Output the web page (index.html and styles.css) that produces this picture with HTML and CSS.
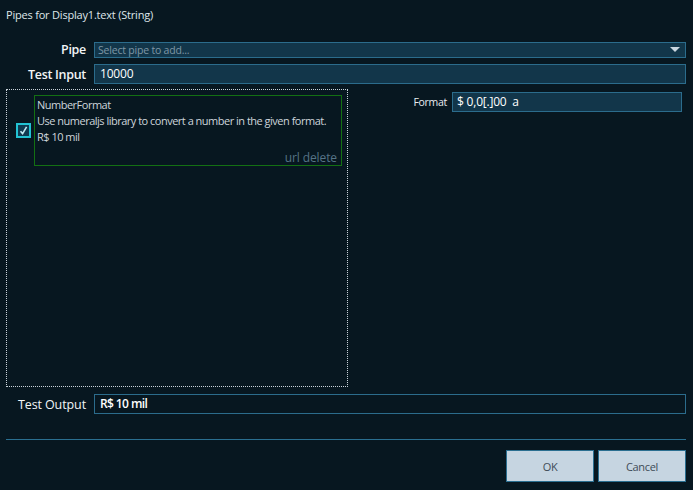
FILE: index.html
```html
<!DOCTYPE html>
<html>
<head>
<meta charset="utf-8">
<link rel="stylesheet" href="styles.css">
</head>
<body>
<div class="dialog">
  <div class="title">Pipes for Display1.text (String)</div>
  <div class="form-row first">
    <label class="label">Pipe</label>
    <div class="select">
      <span class="placeholder">Select pipe to add...</span>
      <svg class="arrow" width="10" height="5" viewBox="0 0 10 5"><path d="M0 0H10L5 5Z" fill="#c9d6e0"/></svg>
    </div>
  </div>
  <div class="form-row">
    <label class="label">Test Input</label>
    <div class="input">10000</div>
  </div>
  <div class="middle">
    <div class="pipes">
      <div class="pipe-item">
        <div class="check">
          <svg width="11" height="11" viewBox="0 0 11 11"><path d="M2.5 6.2L4.6 8.6L8.6 1.8" fill="none" stroke="#bfe9f0" stroke-width="1.6"/></svg>
        </div>
        <div class="pipe-card">
          <div class="pipe-name">NumberFormat</div>
          <div class="pipe-desc">Use numeraljs library to convert a number in the given format.</div>
          <div class="pipe-result">R$ 10 mil</div>
          <div class="pipe-links">url delete</div>
        </div>
      </div>
    </div>
    <div class="params">
      <div class="param-row">
        <span class="param-label">Format</span>
        <div class="param-input">$ 0,0[.]00&nbsp; a</div>
      </div>
    </div>
  </div>
  <div class="form-row output-row">
    <label class="label">Test Output</label>
    <div class="input output">R$ 10 mil</div>
  </div>
  <div class="separator"></div>
  <div class="buttons">
    <button class="btn">OK</button>
    <button class="btn">Cancel</button>
  </div>
</div>
</body>
</html>
```
FILE: styles.css
```css
html, body {
  margin: 0;
  padding: 0;
  background: #071720;
}
body {
  width: 693px;
  height: 490px;
  overflow: hidden;
  font-family: "Open Sans", "Noto Sans", sans-serif;
  color: #e6ecf0;
}
.dialog {
  padding: 0 7px 0 6px;
  display: flex;
  flex-direction: column;
}
.title {
  height: 30px;
  line-height: 30px;
  font-size: 11px;
  color: #dfe6ea;
  letter-spacing: -0.2px;
}
.form-row {
  display: grid;
  grid-template-columns: 80px 1fr;
  column-gap: 8px;
  align-items: center;
  margin-top: 6px;
}
.form-row.first {
  margin-top: 11px;
}
.label {
  text-align: right;
  font-size: 12.5px;
  font-weight: 600;
  color: #f2f5f7;
  letter-spacing: -0.3px;
}
.select {
  height: 16px;
  box-sizing: border-box;
  background: #12364a;
  border: 1px solid #2b6c8c;
  display: flex;
  align-items: center;
  justify-content: space-between;
  padding: 0 5px 0 3px;
}
.placeholder {
  font-size: 10.5px;
  color: #7f97a6;
  letter-spacing: -0.2px;
}
.input {
  height: 20px;
  box-sizing: border-box;
  background: #12364a;
  border: 1px solid #2b6c8c;
  font-size: 12px;
  line-height: 18px;
  padding-left: 5px;
  color: #ffffff;
  letter-spacing: -0.2px;
}
.middle {
  display: flex;
  margin-top: 5px;
  height: 298px;
}
.pipes {
  width: 342px;
  box-sizing: border-box;
  border: 1px dotted #c9d3da;
  padding: 5px 5px 0 9px;
}
.pipe-item {
  display: flex;
  align-items: center;
  gap: 3px;
}
.check {
  width: 15px;
  height: 15px;
  box-sizing: border-box;
  border: 2px solid #22c3d3;
  background: #0f3a50;
  display: flex;
  align-items: center;
  justify-content: center;
}
.pipe-card {
  flex: 1;
  min-width: 0;
  height: 71px;
  box-sizing: border-box;
  border: 1px solid #137013;
  padding: 1px 4px 0 2px;
  font-size: 11px;
  line-height: 16px;
  color: #cdd5db;
  letter-spacing: -0.5px;
  white-space: nowrap;
  display: flex;
  flex-direction: column;
}
.pipe-links {
  margin-top: auto;
  text-align: right;
  color: #567486;
  font-size: 12px;
  line-height: 14px;
  padding-bottom: 0;
  letter-spacing: -0.1px;
}
.params {
  flex: 1;
  padding: 3px 4px 0 0;
}
.param-row {
  display: flex;
  align-items: center;
  justify-content: flex-end;
  gap: 5px;
}
.param-label {
  font-size: 10.5px;
  color: #e8edf0;
  letter-spacing: -0.3px;
}
.param-input {
  width: 230px;
  height: 20px;
  box-sizing: border-box;
  background: #12364a;
  border: 1px solid #2b6c8c;
  font-size: 12px;
  line-height: 18px;
  padding-left: 4px;
  color: #ffffff;
  letter-spacing: -0.2px;
}
.output-row {
  margin-top: 7px;
}
.output-row .label {
  font-weight: 400;
  letter-spacing: -0.1px;
}
.input.output {
  background: #071720;
  font-weight: 600;
  letter-spacing: -0.6px;
}
.separator {
  margin-top: 25px;
  height: 1px;
  background: #2a6f90;
}
.buttons {
  display: flex;
  justify-content: flex-end;
  gap: 4px;
  margin-top: 10px;
}
.btn {
  width: 88px;
  height: 32px;
  box-sizing: border-box;
  background: #c6d5e1;
  border: 1px solid #2a6e90;
  font-family: "Open Sans", "Noto Sans", sans-serif;
  font-size: 11px;
  color: #3e4c57;
  padding: 0;
  letter-spacing: -0.3px;
}
```
